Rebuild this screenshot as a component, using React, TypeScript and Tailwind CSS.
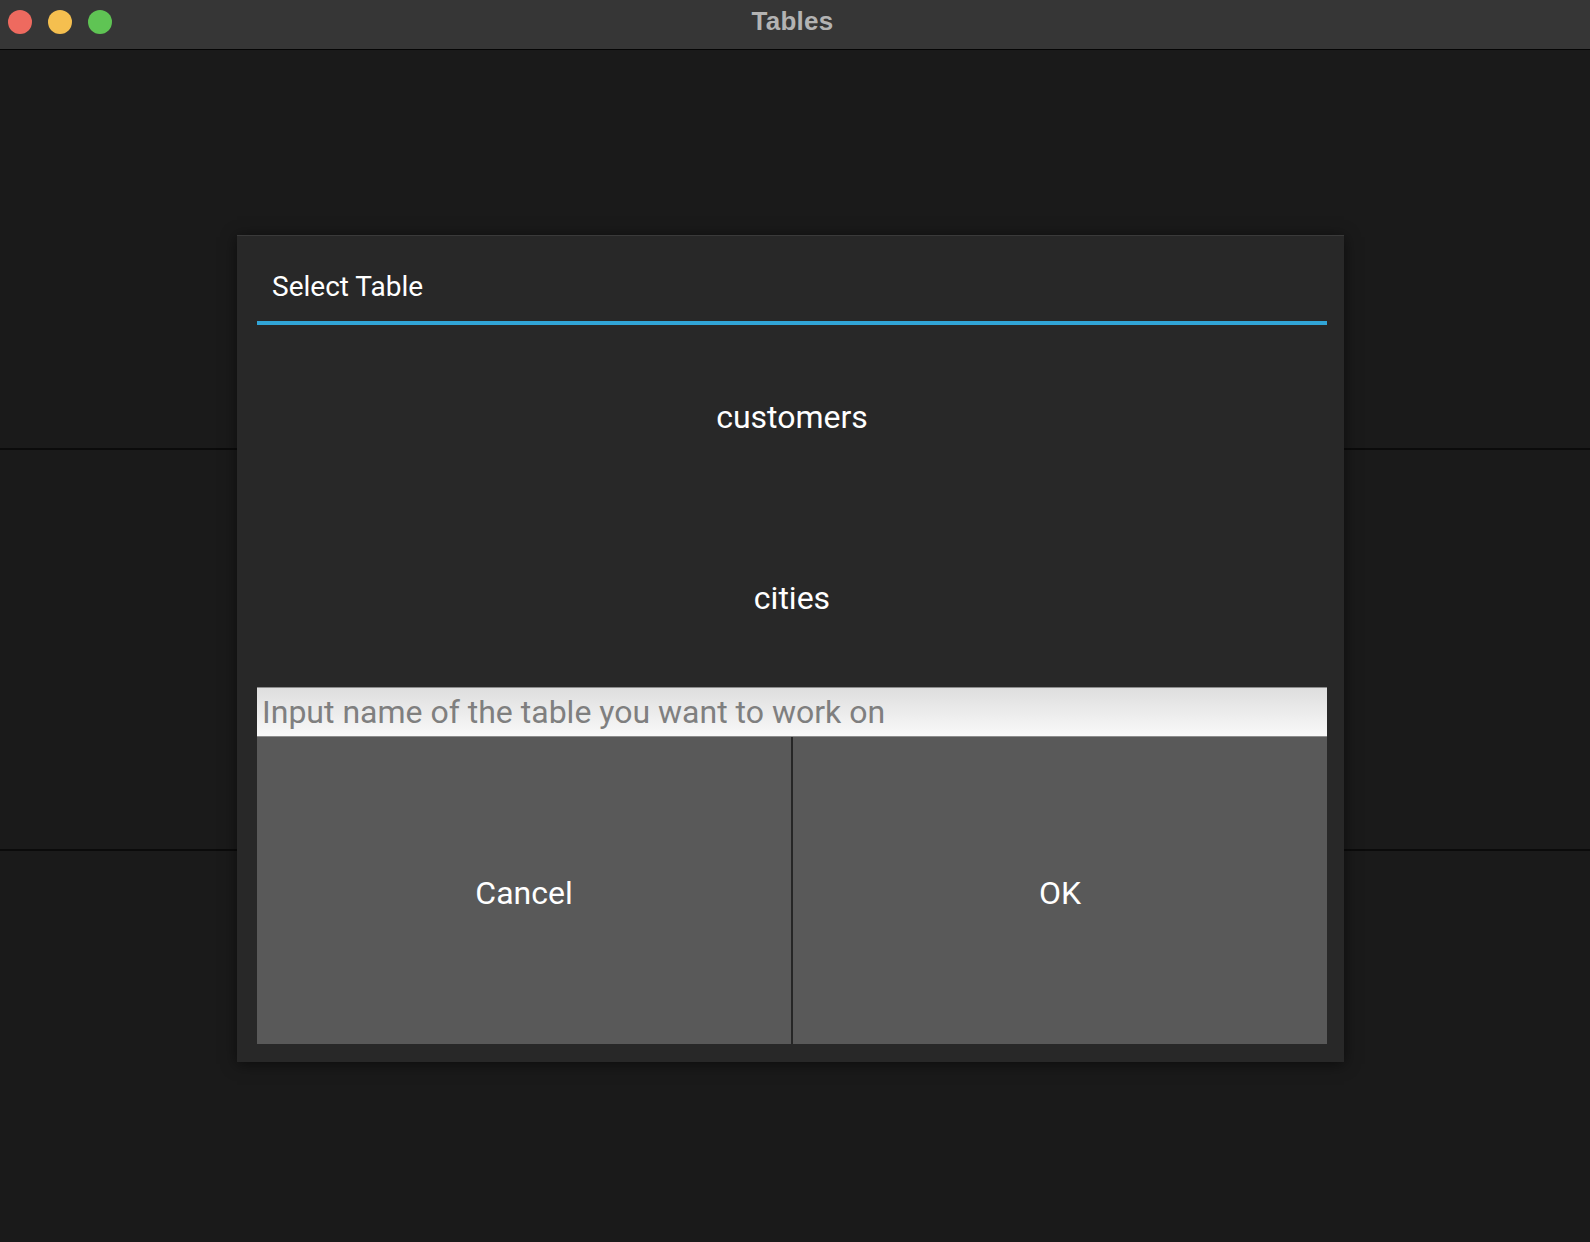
export default function App() {
  const tables = ["customers", "cities"];

  return (
    <div className="relative flex h-[1242px] w-[1590px] flex-col overflow-hidden bg-[#1a1a1a] font-['Roboto',sans-serif]">
      {/* window chrome */}
      <div className="grid h-[50px] shrink-0 grid-cols-[1fr_auto_1fr] border-b border-[#050505] bg-[#363636]">
        <div className="flex items-start gap-[16px] pl-[8px] pt-[10px]">
          <span className="h-[24px] w-[24px] rounded-full bg-[#ee6a5f]" />
          <span className="h-[24px] w-[24px] rounded-full bg-[#f5bf4f]" />
          <span className="h-[24px] w-[24px] rounded-full bg-[#5fc454]" />
        </div>
        <div className="pr-[5px] pt-[4px] font-['Liberation_Sans',sans-serif] text-[26px] font-bold leading-[34px] tracking-[0.3px] text-[#b3b3b3]">
          Tables
        </div>
        <div />
      </div>

      {/* table rows behind the popup */}
      <div className="flex flex-1 flex-col">
        <div className="h-[400px] border-b-2 border-[#0b0b0b]" />
        <div className="h-[401px] border-b-2 border-[#0b0b0b]" />
        <div className="flex-1" />
      </div>

      {/* popup */}
      <div className="absolute left-[237px] top-[235px] flex h-[827px] w-[1107px] flex-col border-t border-[#3a3a3a] bg-[#282828] pb-[18px] pl-[20px] pr-[17px] shadow-[0_2px_14px_rgba(0,0,0,0.55)]">
        <div className="flex h-[85px] shrink-0 items-start pl-[15px] pt-[37px]">
          <span className="text-[28px] leading-[28px] text-white">Select Table</span>
        </div>
        <div className="h-[4px] shrink-0 bg-[#31a5d7]" />

        {tables.map((t) => (
          <div key={t} className="flex h-[181px] shrink-0 items-center justify-center pt-[2px] text-[32px] text-white">
            {t}
          </div>
        ))}

        <input
          className="h-[50px] shrink-0 border-t border-b border-[#8d8d8d] bg-gradient-to-b from-[#dedede] to-[#f9f9f9] pl-[5px] text-[32px] text-[#333] outline-none placeholder:text-[#7f7f7f]"
          placeholder="Input name of the table you want to work on"
        />

        <div className="flex h-[307px] shrink-0 gap-[2px] bg-[#262626]">
          <button className="flex-1 bg-[#595959] pt-[4px] text-[32px] text-white">Cancel</button>
          <button className="flex-1 bg-[#595959] pt-[4px] text-[32px] text-white">OK</button>
        </div>
      </div>
    </div>
  );
}
